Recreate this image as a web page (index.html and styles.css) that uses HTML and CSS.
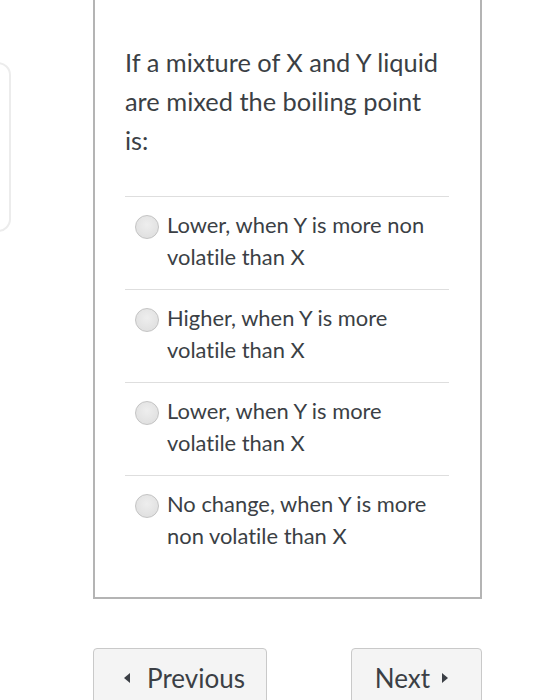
FILE: index.html
```html
<!DOCTYPE html>
<html>
<head>
<meta charset="utf-8">
<link rel="stylesheet" href="styles.css">
</head>
<body>
<div class="page">
  <div class="side">
    <div class="side-card"></div>
  </div>
  <div class="main">
    <div class="quiz">
      <p class="question">If a mixture of X and Y liquid are mixed the boiling point is:</p>
      <ul class="options">
        <li class="option"><span class="radio"></span><span class="label">Lower, when Y is more non volatile than X</span></li>
        <li class="option"><span class="radio"></span><span class="label">Higher, when Y is more volatile than X</span></li>
        <li class="option"><span class="radio"></span><span class="label">Lower, when Y is more volatile than X</span></li>
        <li class="option"><span class="radio"></span><span class="label">No change, when Y is more non volatile than X</span></li>
      </ul>
    </div>
    <div class="nav">
      <button class="btn btn-prev"><span class="tri tri-left"></span>Previous</button>
      <button class="btn btn-next">Next<span class="tri tri-right"></span></button>
    </div>
  </div>
</div>
</body>
</html>
```
FILE: styles.css
```css
html, body {
  margin: 0;
  padding: 0;
  background: #ffffff;
}
body {
  font-family: Lato, "Open Sans", sans-serif;
  font-variant-ligatures: none;
  color: #3b3f45;
  overflow: hidden;
}
.page {
  display: flex;
  align-items: flex-start;
  height: 700px;
}
.side {
  width: 93px;
  flex: none;
}
.side-card {
  margin-top: 62px;
  margin-left: -30px;
  width: 37px;
  height: 166px;
  border: 2px solid #ececec;
  border-radius: 13px;
}
.main {
  width: 389px;
  flex: none;
}
.quiz {
  border: 2px solid #b4b4b4;
  border-top: none;
  padding: 43px 31px 29px 30px;
}
.question {
  margin: 0 0 36px 0;
  font-size: 25.4px;
  line-height: 39px;
}
.options {
  list-style: none;
  margin: 0;
  padding: 0;
}
.option {
  display: flex;
  align-items: flex-start;
  border-top: 1px solid #dedede;
  padding: 12px 0 16px 10px;
  font-size: 21.9px;
  line-height: 32px;
}
.radio {
  flex: none;
  width: 22px;
  height: 22px;
  margin-top: 6px;
  margin-right: 8px;
  border-radius: 50%;
  border: 1px solid #c4c4c4;
  background: radial-gradient(circle at 50% 40%, #eeeeee 0%, #dcdcdc 100%);
}
.label {
  flex: 1;
}
.nav {
  display: flex;
  justify-content: space-between;
  margin-top: 49px;
}
.btn {
  font-family: Lato, "Open Sans", sans-serif;
  font-variant-ligatures: none;
  font-size: 26px;
  color: #3b3f45;
  background: #f4f4f4;
  border: 1px solid #c9c9c9;
  border-radius: 4px;
  height: 64px;
  display: flex;
  align-items: center;
  justify-content: center;
}
.btn-prev {
  width: 174px;
  padding: 0 0 4px 9px;
}
.btn-next {
  width: 131px;
  padding: 0 10px 4px 0;
}
.tri {
  display: inline-block;
  width: 0;
  height: 0;
  border-top: 5px solid transparent;
  border-bottom: 5px solid transparent;
}
.tri-left {
  border-right: 6px solid #3b3f45;
  margin-right: 17px;
}
.tri-right {
  border-left: 6px solid #3b3f45;
  margin-left: 12px;
}
```
